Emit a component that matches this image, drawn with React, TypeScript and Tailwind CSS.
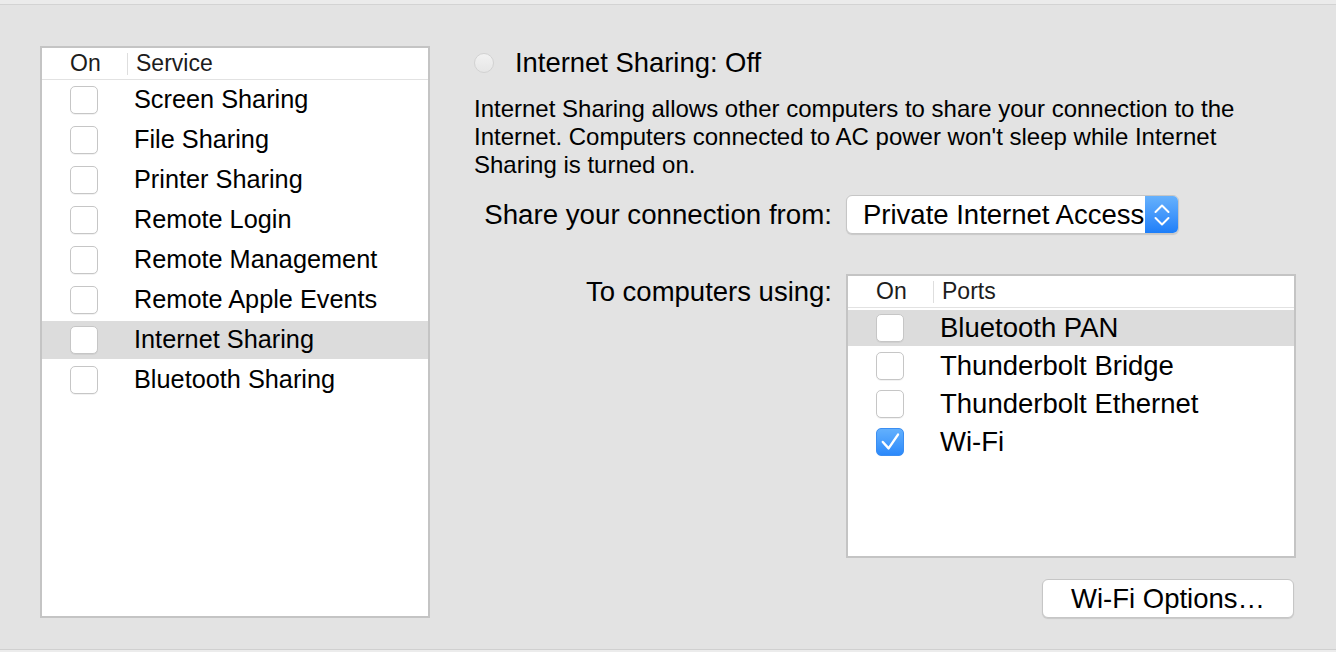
import React from "react";

const services = [
  "Screen Sharing",
  "File Sharing",
  "Printer Sharing",
  "Remote Login",
  "Remote Management",
  "Remote Apple Events",
  "Internet Sharing",
  "Bluetooth Sharing",
];

const ports = [
  { name: "Bluetooth PAN", on: false },
  { name: "Thunderbolt Bridge", on: false },
  { name: "Thunderbolt Ethernet", on: false },
  { name: "Wi-Fi", on: true },
];

function Checkbox({ checked }: { checked?: boolean }) {
  if (checked) {
    return (
      <div className="w-7 h-7 shrink-0 rounded-[5px] bg-linear-to-b from-[#62b0fd] to-[#2a89fb] border border-[#3b8ef2]">
        <svg width="26" height="26" viewBox="0 0 26 26">
          <path
            d="M5.8 13 L11.6 19.4 L21 5.6"
            stroke="white"
            strokeWidth="2.4"
            fill="none"
            strokeLinecap="round"
            strokeLinejoin="round"
          />
        </svg>
      </div>
    );
  }
  return (
    <div className="w-7 h-7 shrink-0 rounded-[5px] bg-white border border-[#c6c6c6] shadow-[0_1px_0_rgba(0,0,0,0.05)]" />
  );
}

function TableHeader({ label }: { label: string }) {
  return (
    <div className="h-[32px] flex items-center border-b border-[#e2e2e2] text-[23px] text-[#1c1c1c]">
      <span className="w-[85px] shrink-0 pl-[28px]">On</span>
      <div className="w-px h-[22px] bg-[#dedede]" />
      <span className="pl-[8px]">{label}</span>
    </div>
  );
}

export default function App() {
  return (
    <div className="w-[1336px] h-[652px] bg-[#e3e3e3] flex flex-col overflow-hidden text-black font-['Liberation_Sans',Arial,sans-serif]">
      {/* top edge */}
      <div className="h-[5px] bg-[#ebebeb] border-b border-[#d3d3d3]" />

      <div className="flex-1 flex items-start pl-10 pt-[41px]">
        {/* Services list */}
        <div className="w-[390px] h-[572px] bg-white border-2 border-[#c4c4c4] shrink-0">
          <TableHeader label="Service" />
          {services.map((s) => (
            <div key={s} className="h-10 py-px">
              <div
                className={`h-full flex items-center pl-[28px] gap-[36px] text-[25.3px] ${
                  s === "Internet Sharing" ? "bg-[#dcdcdc]" : ""
                }`}
              >
                <Checkbox />
                <span>{s}</span>
              </div>
            </div>
          ))}
        </div>

        {/* Detail pane */}
        <div className="ml-[44px] w-[822px] pt-[2px] flex flex-col">
          <div className="h-[30px] flex items-center gap-[21px]">
            <div className="w-5 h-5 rounded-full border border-[#d2d2d2] bg-linear-to-b from-[#f2f2f2] to-[#e6e6e6]" />
            <span className="text-[27.4px]">Internet Sharing: Off</span>
          </div>

          <p className="mt-[17px] text-[24px] leading-[28px] whitespace-nowrap">
            Internet Sharing allows other computers to share your connection to the
            <br />
            Internet. Computers connected to AC power won't sleep while Internet
            <br />
            Sharing is turned on.
          </p>

          <div className="mt-4 flex items-center gap-[14px]">
            <span className="w-[358px] pt-px text-right text-[27.7px] leading-[32px] whitespace-nowrap">
              Share your connection from:
            </span>
            <div className="w-[333px] h-[39px] flex rounded-[6px] bg-white border border-[#c6c6c6] shadow-[0_1px_1px_rgba(0,0,0,0.12)] overflow-hidden">
              <div className="flex-1 flex items-center pt-px pl-[16px] overflow-hidden whitespace-nowrap text-[27.5px] leading-[32px]">
                Private Internet Access
              </div>
              <div className="w-[33px] h-full flex items-center justify-center bg-linear-to-b from-[#66b1fc] to-[#1c7ef9]">
                <svg width="16" height="24" viewBox="0 0 16 24">
                  <path
                    d="M1.5 9 L8 2.5 L14.5 9 M1.5 15 L8 21.5 L14.5 15"
                    stroke="white"
                    strokeWidth="2"
                    fill="none"
                    strokeLinecap="round"
                    strokeLinejoin="round"
                  />
                </svg>
              </div>
            </div>
          </div>

          <div className="mt-10 flex items-start gap-[14px]">
            <span className="w-[358px] mt-[2px] text-right text-[27.5px] leading-[32px] whitespace-nowrap">
              To computers using:
            </span>
            <div className="w-[450px] h-[284px] bg-white border-2 border-[#c4c4c4]">
              <TableHeader label="Ports" />
              {ports.map((p, i) => (
                <div key={p.name} className="h-[38px] pt-[2px]">
                  <div
                    className={`h-full flex items-center pl-[28px] gap-[36px] text-[27.5px] ${
                      i === 0 ? "bg-[#dcdcdc]" : ""
                    }`}
                  >
                    <Checkbox checked={p.on} />
                    <span>{p.name}</span>
                  </div>
                </div>
              ))}
            </div>
          </div>

          <div className="mt-[21px] flex justify-end pr-[2px]">
            <button className="w-[252px] h-[39px] pt-px rounded-[6px] bg-white border border-[#c6c6c6] shadow-[0_1px_1px_rgba(0,0,0,0.12)] text-[27.5px] leading-[32px]">
              Wi-Fi Options…
            </button>
          </div>
        </div>
      </div>

      {/* bottom edge */}
      <div className="h-[3px] bg-[#ececec] border-t border-[#d0d0d0]" />
    </div>
  );
}
